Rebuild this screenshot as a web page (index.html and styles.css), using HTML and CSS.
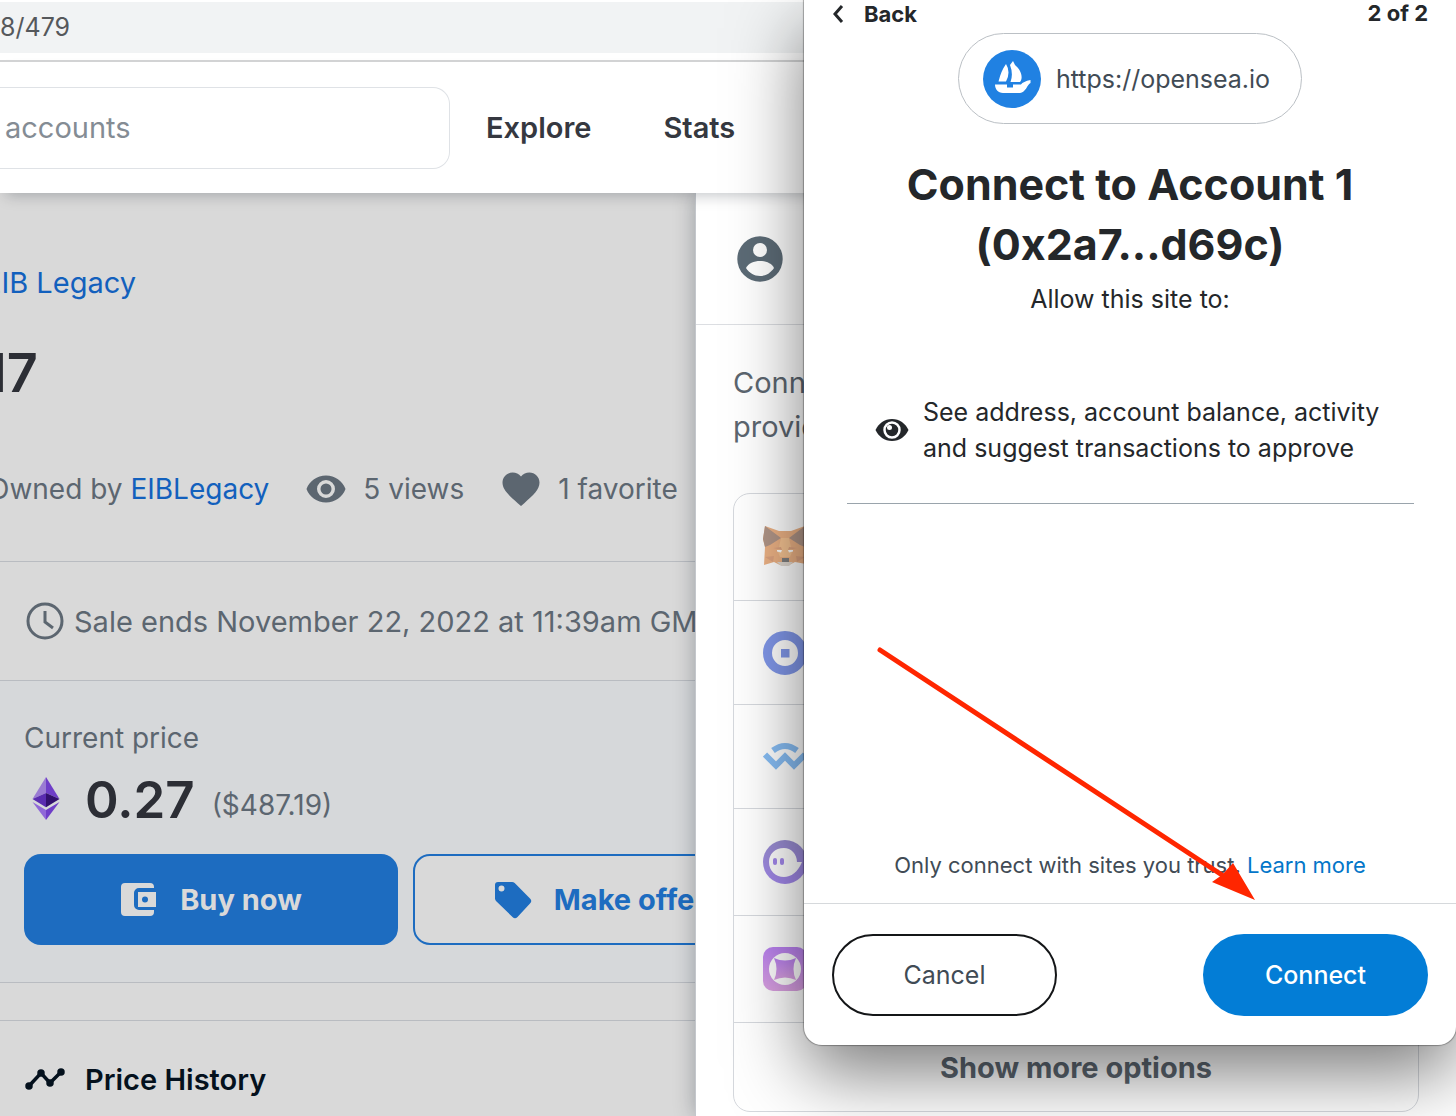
FILE: index.html
```html
<!DOCTYPE html>
<html lang="en">
<head>
    <meta charset="UTF-8">
    <meta name="viewport" content="width=device-width, initial-scale=1.0">
    <title>Connect wallet</title>
    <link rel="stylesheet" href="styles.css">
</head>
<body>
    <div class="address-bar">8/479</div>

    <header class="site-header">
        <input class="search" type="search" placeholder="accounts" aria-label="Search accounts">
        <nav class="nav">
            <a href="#">Explore</a>
            <a href="#">Stats</a>
        </nav>
    </header>

    <div class="page">
        <main class="item">
            <div class="item-head">
                <a class="collection" href="#">EIB Legacy</a>
                <h1>17</h1>
                <div class="meta">
                    <span>Owned by <a href="#">EIBLegacy</a></span>
                    <span class="stat">
                        <svg width="40" height="40" viewBox="0 0 40 40"><path fill="#5c6670" fill-rule="evenodd" d="M20 6.500C11 6.500 3.500 12 .5 20 3.500 28 11 33.500 20 33.500S36.500 28 39.500 20C36.500 12 29 6.500 20 6.500zM20 29a9 9 0 1 1 0-18 9 9 0 0 1 0 18zM20 14.500a5.500 5.500 0 1 0 0 11 5.500 5.500 0 0 0 0-11z"/></svg>
                        5 views
                    </span>
                    <span class="stat">
                        <svg width="40" height="40" viewBox="0 0 40 40"><path fill="#5c6670" d="M20 37l-3-2.600C7.500 26 1.500 20.700 1.500 13.600 1.500 8 6 3.600 11.600 3.600c3.300 0 6.300 1.500 8.400 3.900 2.100-2.400 5.100-3.900 8.400-3.900C34 3.600 38.500 8 38.500 13.600c0 7.100-6 12.400-15.500 20.800z"/></svg>
                        1 favorite
                    </span>
                </div>
            </div>

            <section class="card">
                <div class="sale-ends">
                    <svg width="42" height="42" viewBox="0 0 42 42" fill="none" stroke="#5c6670" stroke-width="3"><circle cx="21" cy="21" r="17"/><path d="M21 11v11l8 6"/></svg>
                    Sale ends November 22, 2022 at 11:39am GMT
                </div>
                <div class="price-box">
                    <div class="price-label">Current price</div>
                    <div class="price-row">
                        <svg width="44" height="44" viewBox="0 0 44 44">
                            <path fill="#9a7bd3" d="M22 0v16L8.500 22z"/>
                            <path fill="#6f3ec8" d="M22 0v16l13.500 6z"/>
                            <path fill="#5a2cb0" d="M22 16v14.200L8.500 22z"/>
                            <path fill="#32106e" d="M22 16v14.200L35.500 22z"/>
                            <path fill="#9068d8" d="M8.500 25l13.500 8v10z"/>
                            <path fill="#6f3ec8" d="M35.500 25L22 33v10z"/>
                        </svg>
                        <strong>0.27</strong>
                        <span>($487.19)</span>
                    </div>
                    <div class="actions">
                        <button class="btn btn-buy">
                            <svg width="38" height="38" viewBox="0 0 38 38"><path fill="#d9d9d9" fill-rule="evenodd" d="M5 2h25a4 4 0 0 1 4 4v1H19a5 5 0 0 0-5 5v12a5 5 0 0 0 5 5h15v2a4 4 0 0 1-4 4H5a4 4 0 0 1-4-4V6a4 4 0 0 1 4-4zM18 11h18v15H18zM25 15.500a3 3 0 1 0 0 6 3 3 0 0 0 0-6z"/></svg>
                            Buy now
                        </button>
                        <button class="btn btn-offer">
                            <svg width="38" height="38" viewBox="0 0 38 38"><path fill="#1d6cc0" fill-rule="evenodd" d="M4 1h14c1 0 2 .4 2.700 1.100L36 17.500a3.500 3.500 0 0 1 0 5L23.500 36a3.500 3.500 0 0 1-5 0L2 20c-.6-.7-1-1.500-1-2.500V4a3 3 0 0 1 3-3zM7.500 4.500a3 3 0 1 0 0 6 3 3 0 0 0 0-6z"/></svg>
                            Make offer
                        </button>
                    </div>
                </div>
            </section>

            <section class="card history">
                <svg width="42" height="24" viewBox="0 0 42 24" fill="#04111d" stroke="#04111d" stroke-width="3.500"><circle cx="5" cy="19" r="2"/><circle cx="17" cy="6" r="2"/><circle cx="26" cy="16" r="2"/><circle cx="37" cy="5" r="2"/><path fill="none" d="M5 19L17 6l9 10L37 5"/></svg>
                <h2>Price History</h2>
            </section>
        </main>

        <aside class="drawer">
            <div class="drawer-head">
                <svg width="46" height="46" viewBox="0 0 46 46"><circle cx="23" cy="23" r="22.700" fill="#5c6b76"/><circle cx="23" cy="14" r="7" fill="#fff"/><path fill="#fff" d="M9 32c2-4.500 8-7 14-7s12 2.500 14 7c-3 4.500-8 8-14 8s-11-3.500-14-8z"/></svg>
            </div>
            <p>Connect with one of our available wallet providers or create a new one.</p>
            <ul class="wallets">
                <li class="tagged">
                    <svg width="44" height="44" viewBox="0 0 44 44">
                        <path fill="#e2843c" d="M2 1l14 5h12l14-5 2 13-2 8 1 17-11-2-6 3h-9l-6-3L1 40l1-18-2-8z"/>
                        <path fill="#835640" d="M2 1l16 12-11 7-5 2-2-8zM42 1L26 13l11 7 5 2 2-8z"/>
                        <path fill="#f0a050" d="M18 13h8l3 14-2 5h-10l-2-5z"/>
                        <path fill="#c96c33" d="M2 32l9-1-1 6zM42 32l-9-1 1 6zM10 23l8-1 1 3zM34 23l-8-1-1 3z"/>
                        <path fill="#fff" d="M14 25l5 0-1 2.500-4-1zM30 25l-5 0 1 2.500 4-1z"/>
                        <path fill="#d0c4b8" d="M14 37h16l-4 4h-8z"/>
                        <path fill="#333" d="M19 33h7v4h-7z"/>
                    </svg>
                </li>
                <li>
                    <svg width="44" height="44" viewBox="0 0 44 44"><circle cx="22" cy="22" r="17.500" fill="none" stroke="#3359dc" stroke-width="9"/><path fill="#3359dc" d="M18 18h8.500v8.500H18z"/></svg>
                </li>
                <li>
                    <svg width="44" height="44" viewBox="0 0 44 44" fill="none" stroke="#3f96ee" stroke-width="6"><path d="M10 15.500q12-9 24 0"/><path d="M2 19.500l11 11 9-9 9 9 11-11"/></svg>
                </li>
                <li class="tagged">
                    <svg width="44" height="44" viewBox="0 0 44 44">
                        <linearGradient id="ghost" x1="0" y1="0" x2="0" y2="1"><stop offset="0" stop-color="#5b49b5"/><stop offset="1" stop-color="#6a3fe0"/></linearGradient>
                        <circle cx="22" cy="22" r="22" fill="url(#ghost)"/>
                        <path fill="#fff" d="M39 22h-5c0-8-6-14-13-14C12 8 6 14 6 22c0 9 7 15 15 15 7 0 14-5 18-15z"/>
                        <rect x="10" y="18" width="4" height="7" rx="2" fill="#6a3fe0"/>
                        <rect x="17" y="18" width="4" height="7" rx="2" fill="#6a3fe0"/>
                    </svg>
                </li>
                <li class="tagged">
                    <svg width="44" height="44" viewBox="0 0 44 44">
                        <linearGradient id="glow" x1="0" y1="0" x2="0" y2="1"><stop offset="0" stop-color="#9035e8"/><stop offset="1" stop-color="#c568d0"/></linearGradient>
                        <rect width="44" height="44" rx="10" fill="url(#glow)"/>
                        <circle cx="22" cy="22" r="16" fill="#fff"/>
                        <path fill="url(#glow)" d="M11 11q11 5 22 0-5 11 0 22-11-5-22 0 5-11 0-22z"/>
                    </svg>
                </li>
                <li class="more"><button>Show more options</button></li>
            </ul>
        </aside>
    </div>

    <div class="popup" role="dialog" aria-labelledby="popup-title">
        <div class="popup-nav">
            <button>
                <svg width="12" height="20" viewBox="0 0 12 20" fill="none" stroke="#24272a" stroke-width="3"><path d="M10 2L3 10l7 8"/></svg>
                Back
            </button>
            <span>2 of 2</span>
        </div>

        <div class="origin">
            <svg width="58" height="58" viewBox="0 0 58 58">
                <circle cx="29" cy="29" r="29" fill="#2081e2"/>
                <path fill="#fff" d="M23 14q5 8 0 17.500H15.500Q18 21 23 14zM27 15l3-4 2 4c5 4 9 12 5 17h-9.500q3-8-.5-17z"/>
                <path fill="#fff" d="M12 34.500h12v3h6v-3h8q2-3 9.500-4.500v3c-3 1-5 10-10.500 10H20c-5 0-8-4-8-8.500z"/>
            </svg>
            https://opensea.io
        </div>

        <h2 id="popup-title">Connect to Account 1 (0x2a7...d69c)</h2>
        <div class="allow">Allow this site to:</div>

        <div class="permission">
            <svg width="34" height="24" viewBox="0 0 34 24"><path fill="#24272a" d="M17 1C9.500 1 3.500 5.500.5 12c3 6.500 9 11 16.500 11s13.500-4.500 16.500-11C30.500 5.500 24.500 1 17 1z"/><circle cx="17" cy="12" r="7.500" fill="none" stroke="#fff" stroke-width="2.500"/><circle cx="14.500" cy="9.500" r="2.500" fill="#fff"/></svg>
            <span>See address, account balance, activity and suggest transactions to approve</span>
        </div>

        <div class="popup-bottom">
            <div class="trust">Only connect with sites you trust. <a href="#">Learn more</a></div>
            <div class="popup-actions">
                <button class="cancel">Cancel</button>
                <button class="connect">Connect</button>
            </div>
        </div>

        <!-- arrow pointing at the connect button -->
        <svg class="arrow" width="652" height="1045" viewBox="0 0 652 1045">
            <path d="M76 650L418 875" stroke="#ff2600" stroke-width="5" stroke-linecap="round"/>
            <path fill="#ff2600" d="M451 900l-43-18 10-7 11-12z"/>
        </svg>
    </div>
</body>
</html>
```
FILE: styles.css
```css
* {
    box-sizing: border-box;
}
body {
    margin: 0;
    height: 100vh;
    display: flex;
    flex-direction: column;
    overflow: hidden;
    position: relative;
    background: #fff;
    color: #5c6670;
    font-family: Inter, "Open Sans", sans-serif;
    font-size: 29px;
}
a {
    color: #1260bd;
    text-decoration: none;
}
button {
    font-family: inherit;
    cursor: pointer;
}
svg {
    display: block;
    flex: none;
}

/* browser bar and site header */
.address-bar {
    flex: none;
    height: 51px;
    margin: 2px 0 7px;
    line-height: 51px;
    background: #f1f3f4;
    color: #55585b;
    font-size: 25px;
}
.site-header {
    flex: none;
    display: flex;
    align-items: center;
    height: 133px;
    border-top: 2px solid #d2d3d4;
    background: #fff;
    box-shadow: 0 8px 14px -6px rgba(4, 17, 29, 0.25);
    position: relative;
    z-index: 1;
}
.search {
    width: 450px;
    height: 82px;
    padding: 0 5px;
    border: 1px solid #dfe2e6;
    border-left: none;
    border-radius: 0 17px 17px 0;
    font-family: inherit;
    font-size: 29px;
}
.search::placeholder {
    color: #848c94;
}
.nav {
    display: flex;
    gap: 72px;
    padding-left: 36px;
}
.nav a {
    color: #353840;
    font-size: 29px;
    font-weight: 600;
}

/* item page behind the drawer */
.page {
    flex: 1;
    min-height: 0;
    display: flex;
}
.item {
    flex: 1;
    min-width: 0;
    overflow: hidden;
    background: #d9d9d9;
    white-space: nowrap;
}
.item-head {
    height: 368px;
    margin-left: -16px;
    padding-top: 68px;
}
.collection {
    display: block;
    line-height: 44px;
}
.item-head h1 {
    margin: 36px 0 0;
    color: #2c2e35;
    font-size: 54px;
    font-weight: 600;
    line-height: 64px;
}
.meta {
    display: flex;
    gap: 37px;
    margin-top: 64px;
    padding-left: 4px;
    line-height: 40px;
    font-size: 28px;
}
.stat {
    display: flex;
    gap: 17px;
}
.card {
    width: 811px;
    border-top: 1px solid #b9bcc1;
    border-bottom: 1px solid #b9bcc1;
}
.sale-ends {
    display: flex;
    align-items: center;
    gap: 8px;
    height: 118px;
    padding-left: 24px;
}
.price-box {
    padding: 37px 24px;
    border-top: 1px solid #b9bcc1;
    background: #d6d8da;
}
.price-label {
    line-height: 40px;
    font-size: 28px;
}
.price-row {
    display: flex;
    align-items: center;
    height: 82px;
}
.price-row strong {
    margin: 0 17px;
    color: #2c2e35;
    font-size: 51px;
    font-weight: 600;
}
.price-row span {
    padding-top: 12px;
    font-size: 28px;
}
.actions {
    display: flex;
    gap: 15px;
    margin-top: 14px;
}
.btn {
    display: flex;
    align-items: center;
    justify-content: center;
    gap: 22px;
    flex: 1;
    height: 91px;
    border: 2px solid #1d6cc0;
    border-radius: 17px;
    font-size: 29px;
    font-weight: 700;
}
.btn-buy {
    background: #1d6cc0;
    color: #d9d9d9;
}
.btn-offer {
    background: #d9d9d9;
    color: #1d6cc0;
}
.history {
    display: flex;
    align-items: center;
    gap: 19px;
    height: 118px;
    margin-top: 37px;
    padding-left: 24px;
}
.history h2 {
    margin: 0;
    color: #04111d;
    font-size: 29px;
    font-weight: 600;
}

/* wallet drawer */
.drawer {
    width: 761px;
    flex: none;
    border-left: 1px solid #c4c7cc;
    background: #fff;
    box-shadow: 0 0 20px rgba(4, 17, 29, 0.3);
}
.drawer-head {
    height: 132px;
    padding: 43px 41px;
    border-bottom: 1px solid #dcdee2;
}
.drawer p {
    margin: 0;
    padding: 36px 90px 44px 37px;
    line-height: 44px;
}
.wallets {
    margin: 0 37px;
    padding: 0;
    border: 1px solid #d5d8dd;
    border-radius: 17px;
    list-style: none;
}
.wallets li {
    display: flex;
    align-items: center;
    height: 104px;
    padding-left: 29px;
    border-bottom: 1px solid #d5d8dd;
}
.wallets li.tagged {
    height: 107px;
}
.wallets svg {
    opacity: 0.62;
}
.wallets li.more {
    height: 88px;
    padding: 0;
    border-bottom: none;
}
.more button {
    width: 100%;
    height: 100%;
    border: none;
    background: none;
    color: #5c6670;
    font-size: 29px;
    font-weight: 700;
}

/* extension popup */
.popup {
    position: absolute;
    z-index: 2;
    top: 0;
    right: 0;
    width: 652px;
    height: 1045px;
    display: flex;
    flex-direction: column;
    border-radius: 0 0 18px 18px;
    background: #fff;
    color: #24272a;
    box-shadow: 0 0 1px 1px rgba(0, 0, 0, 0.3), 0 28px 72px rgba(0, 0, 0, 0.52);
    font-size: 25px;
}
.popup a {
    color: #0376c9;
}
.popup-nav {
    display: flex;
    justify-content: space-between;
    padding: 0 28px;
    font-size: 22px;
    font-weight: 700;
    line-height: 27px;
}
.popup-nav button {
    display: flex;
    align-items: center;
    gap: 20px;
    padding: 0;
    border: none;
    background: none;
    color: inherit;
    font-size: 22px;
    font-weight: 700;
}
.origin {
    display: flex;
    align-items: center;
    align-self: center;
    gap: 15px;
    height: 91px;
    margin-top: 6px;
    padding: 0 31px 0 24px;
    border: 1px solid #bbc0c5;
    border-radius: 46px;
    color: #414b55;
}
.popup h2 {
    margin: 30px 90px 0;
    font-size: 43px;
    font-weight: 700;
    line-height: 60px;
    text-align: center;
}
.allow {
    margin-top: 7px;
    line-height: 36px;
    text-align: center;
}
.permission {
    display: flex;
    align-items: center;
    gap: 14px;
    margin: 77px 42px 0 43px;
    padding: 0 0 37px 28px;
    border-bottom: 1px solid #9aa4ac;
    line-height: 36px;
}
.popup-bottom {
    margin-top: auto;
}
.trust {
    padding-bottom: 22px;
    color: #414b55;
    font-size: 22px;
    line-height: 32px;
    text-align: center;
}
.popup-actions {
    display: flex;
    justify-content: space-between;
    padding: 30px 28px 29px;
    border-top: 1px solid #d6d9dc;
}
.popup-actions button {
    width: 225px;
    height: 82px;
    border-radius: 41px;
    font-size: 25px;
}
.cancel {
    border: 2px solid #141618;
    background: #fff;
    color: #414b55;
}
.connect {
    border: none;
    background: #037dd6;
    color: #fff;
    font-weight: 500;
}
.arrow {
    position: absolute;
    top: 0;
    left: 0;
    pointer-events: none;
}
```
